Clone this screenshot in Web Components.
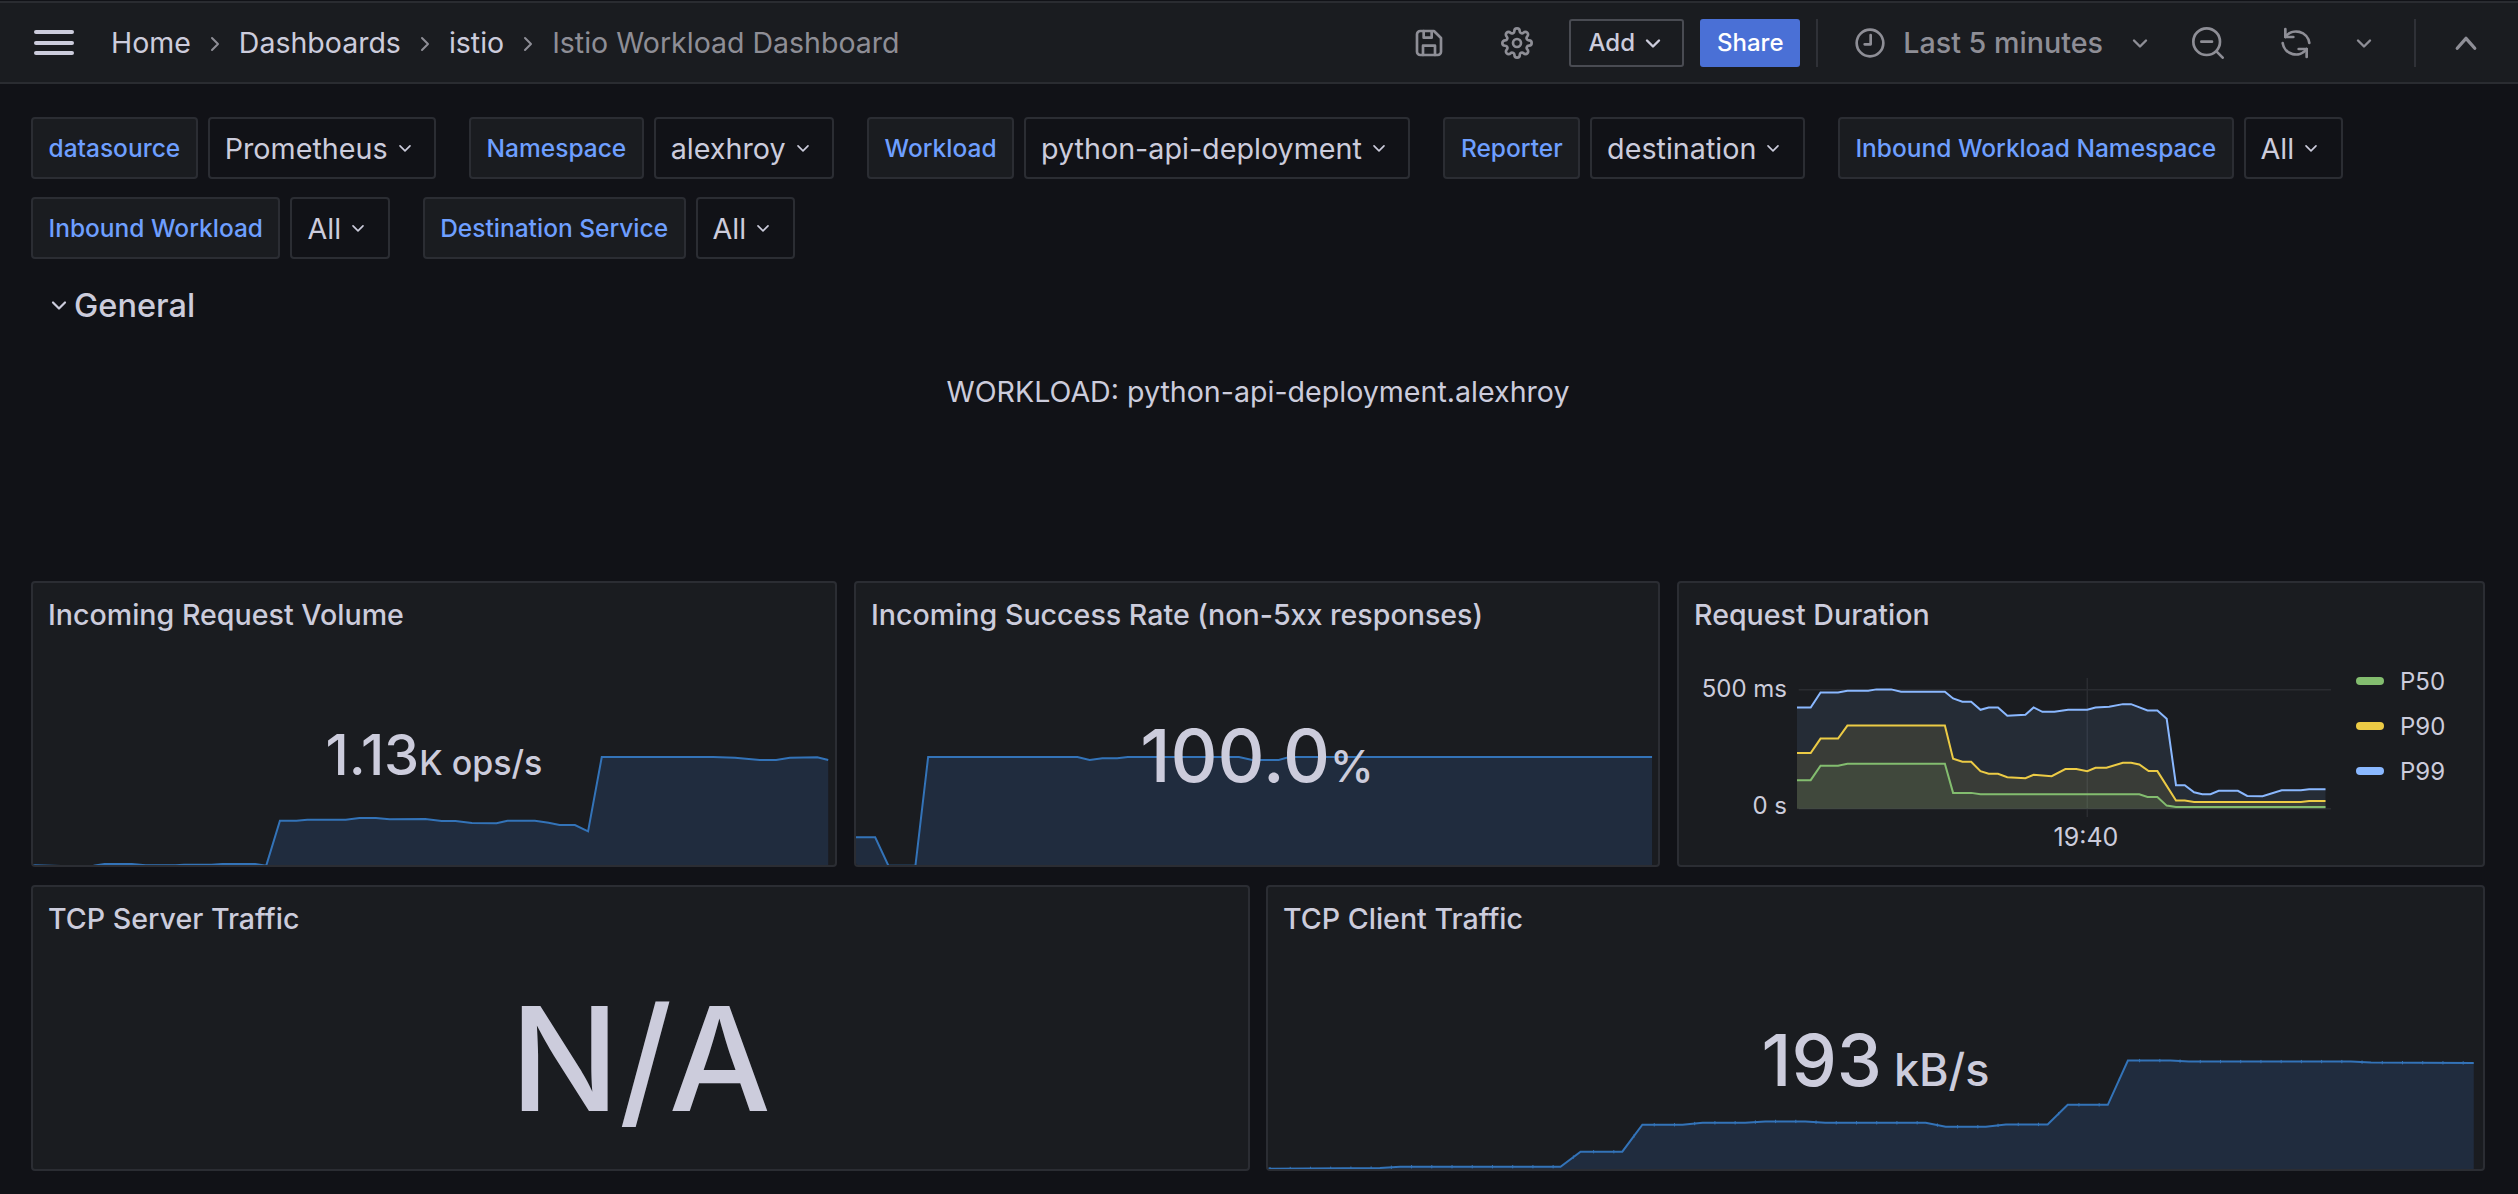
<!DOCTYPE html>
<html>
<head>
<meta charset="utf-8">
<title>Istio Workload Dashboard</title>
<style>
    html, body { margin: 0; height: 100%; }
    body {
        background: #111217;
        color: #ccccdc;
        font-family: Inter, "Liberation Sans", sans-serif;
        overflow: hidden;
    }
    main { display: block; padding: 33px 33px 0 31px; }
    .panels { display: grid; gap: 18px 17px; margin-top: 0; }
    .three { grid-template-columns: 806px 806px 1fr; height: 286px; }
    .two { grid-template-columns: 1219px 1fr; gap: 16px; height: 286px; margin-top: 18px; }
</style>
</head>
<body>
<gf-topbar></gf-topbar>
<main>
    <gf-variables>
        <gf-var label="datasource" value="Prometheus"></gf-var>
        <gf-var label="Namespace" value="alexhroy"></gf-var>
        <gf-var label="Workload" value="python-api-deployment"></gf-var>
        <gf-var label="Reporter" value="destination"></gf-var>
        <gf-var label="Inbound Workload Namespace" value="All"></gf-var>
        <gf-var label="Inbound Workload" value="All"></gf-var>
        <gf-var label="Destination Service" value="All"></gf-var>
    </gf-variables>
    <gf-row-header>General</gf-row-header>
    <gf-text-panel>WORKLOAD: python-api-deployment.alexhroy</gf-text-panel>
    <div class="panels three">
        <gf-stat title="Incoming Request Volume" value="1.13" unit="K ops/s" size="56" unit-size="34" top="94"
            view="56 32 1470 858" base="888"
            points="58,885 110,887 170,886 190,881 240,881 265,885 320,885 335,883 385,883 405,881 465,881 485,886 510,751 540,751 560,748 630,748 655,743 685,743 710,747 775,746 805,752 830,752 860,758 905,759 925,751 975,751 1000,757 1020,764 1048,764 1072,783 1097,560 1300,560 1340,562 1385,569 1415,569 1440,562 1490,561 1510,569"></gf-stat>
        <gf-stat title="Incoming Success Rate (non-5xx responses)" value="100.0" unit="%" size="73" unit-size="44" top="86"
            view="28 32 1522 858" base="888"
            points="30,801 68,801 93,886 144,886 168,560 450,560 473,569 497,564 525,564 545,560 755,560 780,569 830,569 850,560 1535,560"></gf-stat>
        <gf-timeseries title="Request Duration"></gf-timeseries>
    </div>
    <div class="panels two">
        <gf-stat title="TCP Server Traffic" value="N/A" size="144" top="50"></gf-stat>
        <gf-stat title="TCP Client Traffic" value="193" unit=" kB/s" size="72" unit-size="45" top="87"
            view="8 14 1519 860" base="870" ticks="25.2"
            points="10,867 150,865 175,861 375,861 400,816 452,816 477,735 527,735 552,729 605,729 630,725 680,725 705,729 830,729 855,741 905,741 930,734 982,734 1007,675 1057,675 1082,542 1135,542 1158,545 1360,545 1385,548 1513,549"></gf-stat>
    </div>
</main>

<script>
const ICONS = {
    save: '<path d="M5.500 3h10.200L21 8.300v10.200a2.500 2.500 0 0 1-2.500 2.500h-13A2.500 2.500 0 0 1 3 18.500v-13A2.500 2.500 0 0 1 5.500 3z"/><path d="M8 3v5h6V3.200"/><path d="M7.500 21v-7h9v7"/>',
    gear: '<circle cx="12" cy="12" r="3"/><path d="M19.400 15a1.650 1.650 0 0 0 .33 1.820l.06.06a2 2 0 0 1 0 2.830 2 2 0 0 1-2.830 0l-.06-.06a1.650 1.650 0 0 0-1.820-.33 1.650 1.650 0 0 0-1 1.510V21a2 2 0 0 1-2 2 2 2 0 0 1-2-2v-.09A1.650 1.650 0 0 0 9 19.400a1.650 1.650 0 0 0-1.820.33l-.06.06a2 2 0 0 1-2.830 0 2 2 0 0 1 0-2.830l.06-.06a1.650 1.650 0 0 0 .33-1.820 1.650 1.650 0 0 0-1.510-1H3a2 2 0 0 1-2-2 2 2 0 0 1 2-2h.09A1.650 1.650 0 0 0 4.600 9a1.650 1.650 0 0 0-.33-1.820l-.06-.06a2 2 0 0 1 0-2.830 2 2 0 0 1 2.830 0l.06.06a1.650 1.650 0 0 0 1.820.33H9a1.650 1.650 0 0 0 1-1.510V3a2 2 0 0 1 2-2 2 2 0 0 1 2 2v.09a1.650 1.650 0 0 0 1 1.510 1.650 1.650 0 0 0 1.820-.33l.06-.06a2 2 0 0 1 2.830 0 2 2 0 0 1 0 2.830l-.06.06a1.650 1.650 0 0 0-.33 1.820V9a1.650 1.650 0 0 0 1.510 1H21a2 2 0 0 1 2 2 2 2 0 0 1-2 2h-.09a1.650 1.650 0 0 0-1.510 1z"/>',
    clock: '<circle cx="12" cy="12" r="10"/><path d="M12.500 6v7H8"/>',
    zoomOut: '<circle cx="11" cy="11" r="10"/><path d="M7 11h8M18.500 18.500 23 23"/>',
    sync: '<path d="M4 1.500v6h6"/><path d="M4 7.500A10 10 0 0 1 22 12"/><path d="M20 22.500v-6h-6"/><path d="M20 16.500A10 10 0 0 1 2 12"/>',
    chevron: '<path d="M6 9.500l6 6 6-6"/>',
    right: '<path d="M9 6l6 6-6 6"/>',
    up: '<path d="M4.500 16.500L12 8l7.500 8.500"/>'
};

function icon(name, size, width) {
    return `<svg width="${size}" height="${size}" viewBox="0 0 24 24" fill="none" stroke="currentColor" stroke-width="${width}" stroke-linecap="round" stroke-linejoin="round">${ICONS[name]}</svg>`;
}

class Topbar extends HTMLElement {
    constructor() {
        super();
        this.attachShadow({ mode: 'open' });
        this.shadowRoot.innerHTML = `
            <style>
                :host {
                    display: flex;
                    align-items: center;
                    box-sizing: border-box;
                    height: 83px;
                    margin-top: 1px;
                    padding: 0 0 0 34px;
                    background: #1a1c20;
                    border-top: 2px solid #2a2c31;
                    border-bottom: 2px solid #2a2c31;
                    font-size: 28.500px;
                    font-weight: 400;
                    color: #ccccdc;
                }
                .burger { display: flex; flex-direction: column; gap: 6.500px; width: 40px; margin-right: 37px; }
                .burger i { display: block; height: 4px; background: #ccccdc; border-radius: 2px; }
                nav { display: flex; align-items: center; flex: 1; }
                nav svg { color: #8e8e96; margin: 2px 12px 0; }
                .current { color: #8e8e96; }
                .tool { display: flex; color: #8e8e96; }
                .btn {
                    box-sizing: border-box;
                    height: 48px;
                    display: flex;
                    align-items: center;
                    justify-content: center;
                    border-radius: 3px;
                    font-size: 24px;
                    font-weight: 500;
                }
                .add { width: 115px; border: 2px solid #494b52; gap: 6px; }
                .share { width: 100px; background: #4a70d6; color: #fff; margin-left: 16px; }
                .sep { width: 2px; height: 48px; background: #2f3137; }
                .range { font-size: 28.700px; font-weight: 500; color: #8e8e96; }
            </style>
            <div class="burger"><i></i><i></i><i></i></div>
            <nav>
                <span>Home</span>${icon('right', 24, 2)}
                <span>Dashboards</span>${icon('right', 24, 2)}
                <span>istio</span>${icon('right', 24, 2)}
                <span class="current">Istio Workload Dashboard</span>
            </nav>
            <span class="tool" style="margin-right:56px">${icon('save', 32, 2)}</span>
            <span class="tool" style="margin-right:36px">${icon('gear', 32, 2)}</span>
            <span class="btn add">Add ${icon('chevron', 24, 2.400)}</span>
            <span class="btn share">Share</span>
            <span class="sep" style="margin:0 36px 0 16px"></span>
            <span class="tool" style="margin-right:17px">${icon('clock', 32, 2)}</span>
            <span class="range">Last 5 minutes</span>
            <span class="tool" style="margin:0 40px 0 25px">${icon('chevron', 24, 2.400)}</span>
            <span class="tool" style="margin-right:56px">${icon('zoomOut', 32, 2)}</span>
            <span class="tool" style="margin-right:40px">${icon('sync', 32, 2)}</span>
            <span class="tool" style="margin-right:38px">${icon('chevron', 24, 2.400)}</span>
            <span class="sep"></span>
            <span class="tool" style="margin:0 38px 0 36px">${icon('up', 28, 2.800)}</span>
        `;
    }
}

class Variables extends HTMLElement {
    constructor() {
        super();
        this.attachShadow({ mode: 'open' });
        this.shadowRoot.innerHTML = `
            <style>
                :host { display: flex; flex-wrap: wrap; gap: 18px 33px; width: 2350px; }
            </style>
            <slot></slot>
        `;
    }
}

class Var extends HTMLElement {
    constructor() {
        super();
        this.attachShadow({ mode: 'open' });
        this.shadowRoot.innerHTML = `
            <style>
                :host { display: flex; gap: 10px; height: 62px; }
                span {
                    box-sizing: border-box;
                    display: flex;
                    align-items: center;
                    height: 62px;
                    padding: 0 15px;
                    border: 2px solid #2b2d33;
                    border-radius: 4px;
                    white-space: nowrap;
                }
                .label { background: #1a1c20; color: #6e9fff; font-size: 24.500px; font-weight: 500; padding: 0 15.500px; }
                .value { background: #111217; color: #ccccdc; font-size: 28.700px; font-weight: 400; }
                svg { margin-left: 7px; margin-right: 4.500px; }
            </style>
            <span class="label"></span>
            <span class="value"></span>
        `;
    }
    connectedCallback() {
        this.shadowRoot.querySelector('.label').textContent = this.getAttribute('label');
        const value = this.shadowRoot.querySelector('.value');
        value.textContent = this.getAttribute('value');
        value.insertAdjacentHTML('beforeend', icon('chevron', 20, 2));
    }
}

class RowHeader extends HTMLElement {
    constructor() {
        super();
        this.attachShadow({ mode: 'open' });
        this.shadowRoot.innerHTML = `
            <style>
                :host {
                    display: flex;
                    align-items: center;
                    gap: 3px;
                    height: 40px;
                    margin-top: 26px;
                    padding-left: 16px;
                    font-size: 32.500px;
                    font-weight: 500;
                    color: #ccccdc;
                }
            </style>
            ${icon('chevron', 24, 2.200)}<slot></slot>
        `;
    }
}

class TextPanel extends HTMLElement {
    constructor() {
        super();
        this.attachShadow({ mode: 'open' });
        this.shadowRoot.innerHTML = `
            <style>
                :host {
                    display: block;
                    box-sizing: border-box;
                    height: 256px;
                    padding-top: 49px;
                    line-height: 36px;
                    text-align: center;
                    font-size: 28.600px;
                    color: #ccccdc;
                }
            </style>
            <slot></slot>
        `;
    }
}

class Stat extends HTMLElement {
    constructor() {
        super();
        this.attachShadow({ mode: 'open' });
        this.shadowRoot.innerHTML = `
            <style>
                :host {
                    display: block;
                    position: relative;
                    box-sizing: border-box;
                    overflow: hidden;
                    background: #1a1c20;
                    border: 2px solid #2b2d33;
                    border-radius: 4px;
                }
                h2 {
                    margin: 0;
                    padding: 14px 15px 0;
                    height: 36px;
                    line-height: 36px;
                    font-size: 28.600px;
                    font-weight: 500;
                    color: #ccccdc;
                    position: relative;
                }
                svg { position: absolute; left: -2px; top: -2px; width: calc(100% + 4px); height: calc(100% + 4px); }
                .value {
                    position: relative;
                    text-align: center;
                    font-weight: 500;
                    white-space: pre;
                    color: #ccccdc;
                }
            </style>
            <svg preserveAspectRatio="none"></svg>
            <h2></h2>
            <div class="value"><span class="num"></span><span class="unit"></span></div>
        `;
    }
    connectedCallback() {
        const root = this.shadowRoot;
        root.querySelector('h2').textContent = this.getAttribute('title');
        const value = root.querySelector('.value');
        value.style.paddingTop = this.getAttribute('top') + 'px';
        value.style.lineHeight = this.getAttribute('size') + 'px';
        const num = root.querySelector('.num');
        num.textContent = this.getAttribute('value');
        num.style.fontSize = this.getAttribute('size') + 'px';
        const unit = root.querySelector('.unit');
        unit.textContent = this.getAttribute('unit') || '';
        unit.style.fontSize = (this.getAttribute('unit-size') || 0) + 'px';
        this._drawChart(root.querySelector('svg'));
    }
    _drawChart(svg) {
        if (!this.hasAttribute('points')) {
            svg.remove();
            return;
        }
        const points = this.getAttribute('points');
        const base = this.getAttribute('base');
        const pairs = points.split(' ').map((p) => p.split(',').map(Number));
        const first = pairs[0][0];
        const last = pairs[pairs.length - 1][0];
        svg.setAttribute('viewBox', this.getAttribute('view'));
        let marks = '';
        if (this.hasAttribute('ticks')) {
            const step = Number(this.getAttribute('ticks'));
            let d = '';
            for (let x = first + 3; x < last; x += step) {
                const i = pairs.findIndex((p) => p[0] >= x);
                const [x0, y0] = pairs[i - 1] || pairs[0];
                const [x1, y1] = pairs[i];
                const y = x1 === x0 ? y1 : y0 + (y1 - y0) * (x - x0) / (x1 - x0);
                d += `M${x} ${y - 5}V${y + 5}`;
            }
            marks = `<path d="${d}" stroke="#3373b8" stroke-width="1" vector-effect="non-scaling-stroke" fill="none"/>`;
        }
        svg.innerHTML = `
            <polygon points="${first},${base} ${points} ${last},${base}" fill="#202c3e"/>
            <polyline points="${points}" fill="none" stroke="#3373b8" stroke-width="2" vector-effect="non-scaling-stroke"/>
            ${marks}
        `;
    }
}

const SERIES = [
    { name: 'P50', color: '#83bd6f', points: '250,630 275,630 293,587 325,587 342,581 520,581 535,668 568,668 585,672 875,672 890,680 908,680 925,706 942,710 1215,710' },
    { name: 'P90', color: '#eccb45', points: '250,549 275,549 293,506 325,506 342,467 520,467 535,566 552,575 568,575 585,603 600,611 617,611 634,621 667,624 682,614 715,618 740,597 760,597 780,603 795,593 815,593 845,578 860,578 875,583 892,603 908,603 942,691 958,691 975,695 1170,695 1185,692 1215,692' },
    { name: 'P99', color: '#8ab8ff', points: '250,413 275,413 293,368 325,368 342,363 380,363 395,359 422,359 440,366 520,366 535,386 552,396 568,396 585,420 600,413 617,413 634,438 667,435 682,413 698,426 720,426 745,420 780,420 795,413 820,411 845,403 860,403 890,422 908,422 925,447 942,645 958,645 975,666 990,672 1005,672 1020,662 1055,662 1072,677 1100,678 1135,660 1170,660 1185,657 1215,657' }
];

class Timeseries extends HTMLElement {
    constructor() {
        super();
        this.attachShadow({ mode: 'open' });
        const areas = SERIES.slice().reverse().map((s) => `
            <polygon points="250,715 ${s.points} 1215,715" fill="${s.color}" fill-opacity="0.1"/>
            <polyline points="${s.points}" fill="none" stroke="${s.color}" stroke-width="2" vector-effect="non-scaling-stroke"/>
        `).join('');
        const legend = SERIES.map((s) => `<li><i style="background:${s.color}"></i>${s.name}</li>`).join('');
        this.shadowRoot.innerHTML = `
            <style>
                :host {
                    display: block;
                    box-sizing: border-box;
                    background: #1a1c20;
                    border: 2px solid #2b2d33;
                    border-radius: 4px;
                }
                h2 {
                    margin: 0;
                    padding: 14px 15px 0;
                    height: 36px;
                    line-height: 36px;
                    font-size: 28.600px;
                    font-weight: 500;
                    color: #ccccdc;
                }
                .body {
                    display: grid;
                    grid-template-columns: 108px 534px 1fr;
                    grid-template-rows: 155px auto;
                    column-gap: 10px;
                    margin-top: 37px;
                    font-size: 24px;
                }
                .y {
                    display: flex;
                    flex-direction: column;
                    justify-content: space-between;
                    padding: 4px 0;
                    text-align: right;
                    line-height: 30px;
                }
                svg { display: block; width: 534px; height: 139px; margin-top: 8px; }
                .x { grid-column: 2; text-align: center; line-height: 30px; margin-top: -3px; margin-left: 44px; font-size: 25px; }
                ul {
                    grid-row: 1 / 3;
                    grid-column: 3;
                    list-style: none;
                    margin: -4px 0 0 15px;
                    padding: 0;
                    font-size: 24px;
                    display: flex;
                    flex-direction: column;
                    gap: 15px;
                }
                li { display: flex; align-items: center; gap: 16px; height: 30px; }
                li i { display: block; width: 28px; height: 8px; border-radius: 4px; }
            </style>
            <h2></h2>
            <div class="body">
                <div class="y"><span>500 ms</span><span>0 s</span></div>
                <svg viewBox="250 325 975 415" preserveAspectRatio="none">
                    <path d="M253 360H1225M253 715H1225M780 325V740" stroke="#2a2c31" stroke-width="1.500" vector-effect="non-scaling-stroke" fill="none"/>
                    ${areas}
                </svg>
                <ul>${legend}</ul>
                <div class="x">19:40</div>
            </div>
        `;
    }
    connectedCallback() {
        this.shadowRoot.querySelector('h2').textContent = this.getAttribute('title');
    }
}

customElements.define('gf-topbar', Topbar);
customElements.define('gf-variables', Variables);
customElements.define('gf-var', Var);
customElements.define('gf-row-header', RowHeader);
customElements.define('gf-text-panel', TextPanel);
customElements.define('gf-stat', Stat);
customElements.define('gf-timeseries', Timeseries);
</script>
</body>
</html>
